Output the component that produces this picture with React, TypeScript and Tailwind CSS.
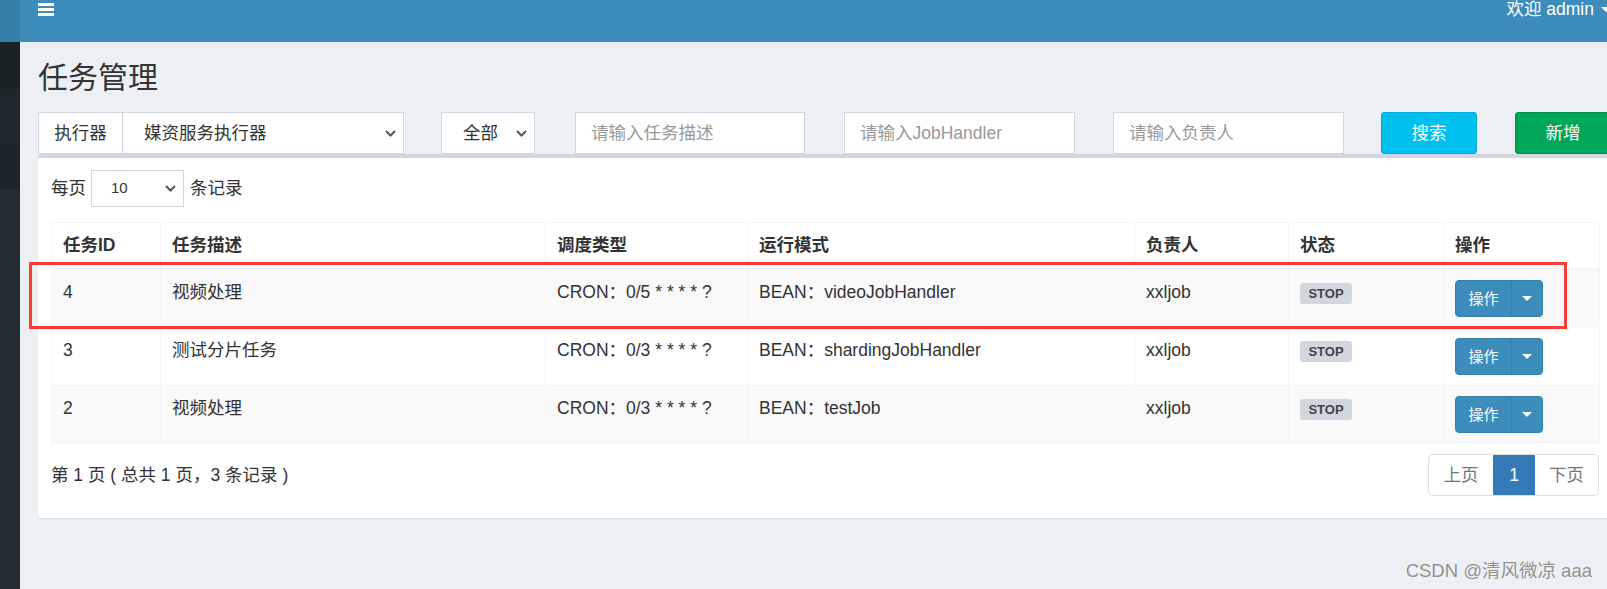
import React from "react";

const rows = [
  { id: "4", desc: "视频处理", cron: "CRON：0/5 * * * * ?", mode: "BEAN：videoJobHandler", author: "xxljob" },
  { id: "3", desc: "测试分片任务", cron: "CRON：0/3 * * * * ?", mode: "BEAN：shardingJobHandler", author: "xxljob" },
  { id: "2", desc: "视频处理", cron: "CRON：0/3 * * * * ?", mode: "BEAN：testJob", author: "xxljob" },
];

const columns = [
  { title: "任务ID", width: 109 },
  { title: "任务描述", width: 385 },
  { title: "调度类型", width: 202 },
  { title: "运行模式", width: 387 },
  { title: "负责人", width: 154 },
  { title: "状态", width: 155 },
  { title: "操作", width: 156 },
];

const Chevron = () => (
  <svg width="11" height="7" viewBox="0 0 11 7" className="shrink-0">
    <path d="M1 1l4.5 4.5L10 1" fill="none" stroke="#555" strokeWidth="2" />
  </svg>
);

const FakeSelect = ({ label, className }: { label: string; className: string }) => (
  <div className={`flex items-center justify-between border border-[#d2d6de] bg-white pl-[21px] pr-[7px] ${className}`}>
    <span>{label}</span>
    <Chevron />
  </div>
);

const FakeInput = ({ placeholder, className }: { placeholder: string; className: string }) => (
  <div className={`flex items-center border border-[#d2d6de] bg-white pl-[15px] text-[#999] ${className}`}>
    {placeholder}
  </div>
);

export default function App() {
  return (
    <div className="relative flex h-[589px] w-full overflow-hidden bg-[#ecf0f5] font-['Liberation_Sans','Noto_Sans_CJK_SC',sans-serif] text-[17.5px] text-[#333]">
      {/* sidebar (collapsed) */}
      <aside className="flex w-[20px] shrink-0 flex-col">
        <div className="h-[42px] bg-[#367fa9]" />
        <div className="h-[47px] bg-[#1a2226]" />
        <div className="h-[55px] bg-[#1e282c]" />
        <div className="h-[45px] bg-[#1b2428]" />
        <div className="flex-1 bg-[#222d32]" />
      </aside>

      <div className="flex min-w-0 flex-1 flex-col overflow-hidden">
        {/* top navbar */}
        <header className="flex h-[42px] shrink-0 items-start bg-[#3c8dbc] pl-[18px]">
          <svg width="16" height="14" viewBox="0 0 16 14" className="mt-[3px]">
            <rect x="0" y="0" width="16" height="3" fill="#fff" />
            <rect x="0" y="5" width="16" height="3" fill="#fff" />
            <rect x="0" y="10" width="16" height="3" fill="#fff" />
          </svg>
          <div className="ml-auto mr-[-4px] mt-[-3px] flex items-center gap-[7px] whitespace-nowrap leading-[25px] text-white">
            <span>欢迎 admin</span>
            <span className="h-0 w-0 border-x-[5px] border-t-[5px] border-x-transparent border-t-white" />
          </div>
        </header>

        {/* content */}
        <main className="flex-1 pl-[18px]">
          <h1 className="pt-[19px] text-[30px] font-normal leading-[33px]">任务管理</h1>

          <div className="mt-[18px] flex h-[42px] whitespace-nowrap">
            <div className="flex w-[366px] shrink-0">
              <div className="flex w-[85px] items-center justify-center border border-[#d2d6de] bg-white">执行器</div>
              <FakeSelect label="媒资服务执行器" className="flex-1 border-l-0" />
            </div>
            <FakeSelect label="全部" className="ml-[37px] w-[94px] shrink-0" />
            <FakeInput placeholder="请输入任务描述" className="ml-[40px] w-[230px] shrink-0" />
            <FakeInput placeholder="请输入JobHandler" className="ml-[39px] w-[231px] shrink-0" />
            <FakeInput placeholder="请输入负责人" className="ml-[38px] w-[231px] shrink-0" />
            <button className="ml-[37px] w-[96px] shrink-0 rounded-[3px] border border-[#00acd6] bg-[#00c0ef] text-white">搜索</button>
            <button className="ml-[38px] w-[96px] shrink-0 rounded-[3px] border border-[#008d4c] bg-[#00a65a] text-white">新增</button>
          </div>

          {/* box */}
          <section className="w-[1574px] rounded-[3px] border-t-4 border-[#d2d6de] bg-white px-[13px] pb-[22px] pt-[12px] shadow-[0_1px_1px_rgba(0,0,0,0.1)]">
            <div className="flex h-[37px] items-center">
              <span>每页</span>
              <div className="ml-[5px] flex h-[37px] w-[93px] items-center justify-between border border-[#d2d6de] pl-[19px] pr-[7px] text-[15px]">
                <span>10</span>
                <Chevron />
              </div>
              <span className="ml-[6px]">条记录</span>
            </div>

            <table className="mt-[15px] w-[1548px] table-fixed border-collapse border border-[#f4f4f4]">
              <colgroup>
                {columns.map((c) => (
                  <col key={c.title} style={{ width: c.width }} />
                ))}
              </colgroup>
              <thead>
                <tr>
                  {columns.map((c) => (
                    <th key={c.title} className="border border-b-2 border-[#f4f4f4] px-[11px] py-[10px] text-left font-bold leading-[25px]">
                      {c.title}
                    </th>
                  ))}
                </tr>
              </thead>
              <tbody>
                {rows.map((r, i) => (
                  <tr key={r.id} className={i % 2 === 0 ? "bg-[#f9f9f9]" : "bg-white"}>
                    <td className="border border-[#f4f4f4] px-[11px] py-[10px] align-top leading-[25px]">{r.id}</td>
                    <td className="border border-[#f4f4f4] px-[11px] py-[10px] align-top leading-[25px]">{r.desc}</td>
                    <td className="border border-[#f4f4f4] px-[11px] py-[10px] align-top leading-[25px]">{r.cron}</td>
                    <td className="border border-[#f4f4f4] px-[11px] py-[10px] align-top leading-[25px]">{r.mode}</td>
                    <td className="border border-[#f4f4f4] px-[11px] py-[10px] align-top leading-[25px]">{r.author}</td>
                    <td className="border border-[#f4f4f4] px-[11px] py-[10px] align-top leading-[25px]">
                      <span className="mt-[3px] block h-[21px] w-[52px] rounded-[3px] bg-[#d2d6de] text-center text-[13px] font-bold leading-[21px] text-[#444]">
                        STOP
                      </span>
                    </td>
                    <td className="border border-[#f4f4f4] px-[11px] py-[10px] align-top leading-[25px]">
                      <div className="inline-flex h-[37px] rounded-[4px] border border-[#367fa9] bg-[#3c8dbc] align-top text-white">
                        <span className="flex w-[55px] items-center justify-center text-[15px]">操作</span>
                        <span className="flex w-[31px] items-center justify-center border-l border-[#367fa9]">
                          <span className="h-0 w-0 border-x-[5px] border-t-[5px] border-x-transparent border-t-white" />
                        </span>
                      </div>
                    </td>
                  </tr>
                ))}
              </tbody>
            </table>

            <div className="mt-[10px] flex h-[42px] items-center justify-between">
              <span>第 1 页 ( 总共 1 页，3 条记录 )</span>
              <div className="flex h-[42px] overflow-hidden rounded-[5px] border border-[#ddd] text-[#777]">
                <span className="flex w-[64px] items-center justify-center">上页</span>
                <span className="flex w-[42px] items-center justify-center bg-[#337ab7] text-white">1</span>
                <span className="flex w-[63px] items-center justify-center">下页</span>
              </div>
            </div>
          </section>
        </main>
      </div>

      {/* annotation overlay */}
      <div className="pointer-events-none absolute left-[29px] top-[262px] h-[67px] w-[1538px] border-[3px] border-[#fb3a3a]" />

      {/* watermark */}
      <div className="pointer-events-none absolute bottom-[6px] right-[15px] whitespace-nowrap text-[18.5px] leading-[24px] text-[#8f8f8f] [text-shadow:0_0_1px_#fff]">
        CSDN @清风微凉 aaa
      </div>
    </div>
  );
}
